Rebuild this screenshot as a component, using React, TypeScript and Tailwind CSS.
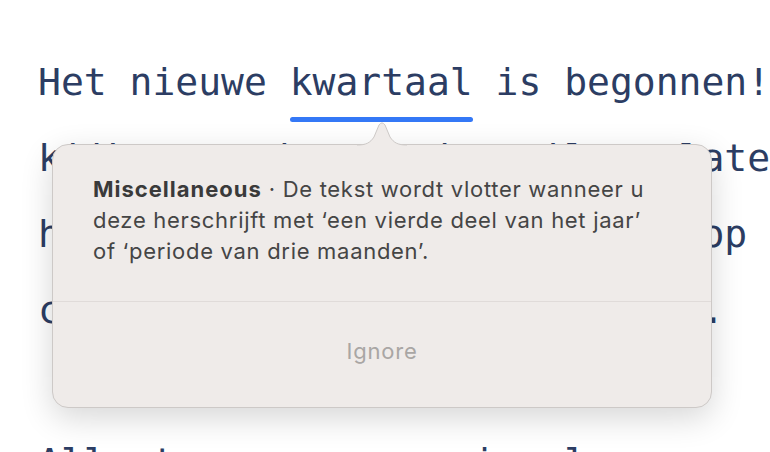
import React from "react";

export default function App() {
  const mono = { fontFamily: '"DejaVu Sans Mono", "Liberation Mono", monospace' };
  const sans = { fontFamily: 'Inter, "Noto Sans", "Liberation Sans", sans-serif' };
  return (
    <div className="relative w-[770px] h-[452px] overflow-hidden bg-white">
      <div
        className="pl-[38px] pt-[44px] text-[38px] leading-[76px] text-[#2c3d63] whitespace-pre"
        style={mono}
      >
        <div>
          Het nieuwe <span className="relative">kwartaal<span className="absolute left-0 right-0 top-[57px] h-[5px] rounded-full bg-[#3478f6]" /></span> is begonnen!
        </div>
        <div>kijk naar de agenda, wilt u late</div>
        <div>houd de nieuwe doelen scherp op</div>
        <div>controleer het team dagelijks.</div>
        <div>&nbsp;</div>
        <div>Alle teams ervaren in al ons</div>
      </div>

      {/* popover */}
      <div className="absolute left-[52px] top-[144px] w-[660px] h-[264px] rounded-[16px] border border-[#cdc9c7] bg-[#efebe9] shadow-[0_10px_32px_rgba(0,0,0,0.16)] flex flex-col" style={sans}>
        <div className="h-[156px] pl-[40px] pr-[10px] pt-[29px] text-[22px] tracking-[0.7px] leading-[31px] text-[#454545] whitespace-nowrap">
          <span className="font-bold text-[#3a3a3a] tracking-[1px]">Miscellaneous</span>
          {" · "}De tekst wordt vlotter wanneer u
          <br />
          deze herschrijft met ‘een vierde deel van het jaar’
          <br />
          of ‘periode van drie maanden’.
        </div>
        <div className="h-px bg-[#e0dbd9]" />
        <div className="flex-1 flex items-center justify-center text-[22px] tracking-[0.8px] text-[#a9a6a4] pb-[6px]">
          Ignore
        </div>
      </div>
      {/* arrow */}
      <svg
        className="absolute left-[357px] top-[120px]"
        width="50"
        height="26"
        viewBox="0 0 50 26"
      >
        <path
          d="M0 25 C9 25 13 23 17 17 L22 5 Q25 0.8 28 5 L33 17 C37 23 41 25 50 25"
          fill="#efebe9"
          stroke="#cdc9c7"
          strokeWidth="1"
        />
      </svg>
    </div>
  );
}
